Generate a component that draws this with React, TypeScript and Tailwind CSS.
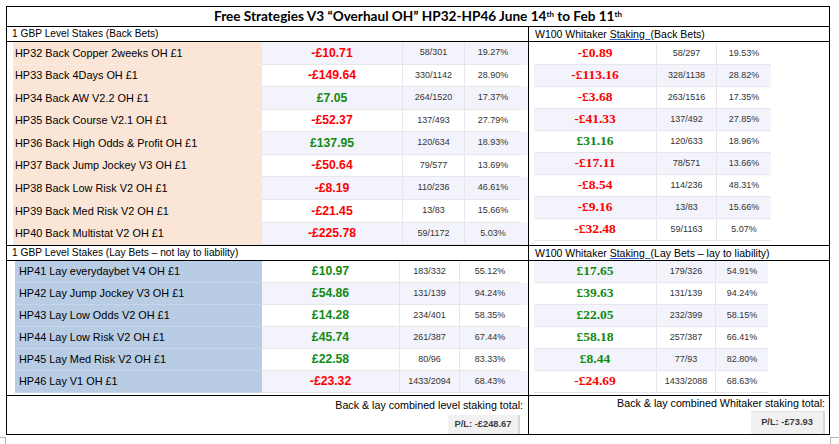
const backRows = [
  ["HP32 Back Copper 2weeks OH £1", "-£10.71", "58/301", "19.27%"],
  ["HP33 Back 4Days OH £1", "-£149.64", "330/1142", "28.90%"],
  ["HP34 Back AW V2.2 OH £1", "£7.05", "264/1520", "17.37%"],
  ["HP35 Back Course V2.1 OH £1", "-£52.37", "137/493", "27.79%"],
  ["HP36 Back High Odds & Profit OH £1", "£137.95", "120/634", "18.93%"],
  ["HP37 Back Jump Jockey V3 OH £1", "-£50.64", "79/577", "13.69%"],
  ["HP38 Back Low Risk V2 OH £1", "-£8.19", "110/236", "46.61%"],
  ["HP39 Back Med Risk V2 OH £1", "-£21.45", "13/83", "15.66%"],
  ["HP40 Back Multistat V2 OH £1", "-£225.78", "59/1172", "5.03%"],
];

const backWhitaker = [
  ["-£0.89", "58/297", "19.53%"],
  ["-£113.16", "328/1138", "28.82%"],
  ["-£3.68", "263/1516", "17.35%"],
  ["-£41.33", "137/492", "27.85%"],
  ["£31.16", "120/633", "18.96%"],
  ["-£17.11", "78/571", "13.66%"],
  ["-£8.54", "114/236", "48.31%"],
  ["-£9.16", "13/83", "15.66%"],
  ["-£32.48", "59/1163", "5.07%"],
];

const layRows = [
  ["HP41 Lay everydaybet V4 OH £1", "£10.97", "183/332", "55.12%"],
  ["HP42 Lay Jump Jockey V3 OH £1", "£54.86", "131/139", "94.24%"],
  ["HP43 Lay Low Odds V2 OH £1", "£14.28", "234/401", "58.35%"],
  ["HP44 Lay Low Risk V2 OH £1", "£45.74", "261/387", "67.44%"],
  ["HP45 Lay Med Risk V2 OH £1", "£22.58", "80/96", "83.33%"],
  ["HP46 Lay V1 OH £1", "-£23.32", "1433/2094", "68.43%"],
];

const layWhitaker = [
  ["£17.65", "179/326", "54.91%"],
  ["£39.63", "131/139", "94.24%"],
  ["£22.05", "232/399", "58.15%"],
  ["£58.18", "257/387", "66.41%"],
  ["£8.44", "77/93", "82.80%"],
  ["-£24.69", "1433/2088", "68.63%"],
];

const money = (v: string) => (v.startsWith("-") ? "text-[#ff0000]" : "text-[#118a11]");

function Staking({ label }: { label: string }) {
  return (
    <div className="h-[15px] pl-[6px] text-[10.5px] leading-[14px] text-black">
      W100 Whitaker{" "}
      <span className="underline decoration-[#2f5cc8] underline-offset-[1px]">Staking&nbsp;&nbsp;</span>
      {label}
    </div>
  );
}

export default function App() {
  return (
    <div className="h-[444px] w-[839px] bg-white pt-[6px] pl-[6px] font-['Liberation_Sans',Arial,sans-serif] text-black">
      <div className="w-[824px] border border-black">
        {/* title */}
        <div className="flex h-[20px] items-center justify-center border-b border-black font-['Lato',sans-serif] text-[13.6px] font-bold">
          <span>
            Free Strategies V3 “Overhaul OH” HP32-HP46 June 14<sup className="text-[8px]">th</sup> to Feb 11
            <sup className="text-[8px]">th</sup>
          </span>
        </div>

        {/* back bets header */}
        <div className="flex h-[15px] border-b border-black">
          <div className="w-[522px] border-r border-black pl-[5px] text-[10.2px] leading-[14px]">1 GBP Level Stakes (Back Bets)</div>
          <div className="w-[300px]">
            <Staking label="(Back Bets)" />
          </div>
        </div>

        {/* back bets body */}
        <div className="flex h-[204px] border-b border-black">
          <div className="flex w-[522px] flex-col border-r border-black pl-[6px]">
            {backRows.map((r, i) => (
              <div key={r[0]} className={`flex flex-1 items-center ${i % 2 === 0 ? "bg-[#f3f3fb]" : "bg-white"}`}>
                <div className="flex h-full w-[249px] items-center border-b border-[#f6ece4] bg-[#fbe5d6] pl-[2px] text-[10.9px]">{r[0]}</div>
                <div className={`flex h-full w-[141px] items-center justify-center border-b border-r border-[#e6e6ec] text-[12.2px] font-bold ${money(r[1])}`}>{r[1]}</div>
                <div className="flex h-full w-[62px] items-center justify-center border-b border-r border-[#e6e6ec] text-[9px] text-[#333]">{r[2]}</div>
                <div className="flex h-full w-[56px] items-center justify-center border-b border-[#e6e6ec] text-[9px] text-[#333]">{r[3]}</div>
              </div>
            ))}
          </div>
          <div className="flex w-[300px] flex-col pt-[1px] pl-[5px]">
            {backWhitaker.map((r, i) => (
              <div key={i} className={`flex h-[22px] w-[237px] ${i % 2 === 1 ? "bg-[#f3f3fb]" : "bg-white"}`}>
                <div className={`flex w-[123px] items-center justify-center border-b border-r border-[#e6e6ec] font-['Liberation_Serif',serif] text-[13.5px] font-bold ${money(r[0])}`}>{r[0]}</div>
                <div className="flex w-[60px] items-center justify-center border-b border-r border-[#e6e6ec] text-[9px] text-[#333]">{r[1]}</div>
                <div className="flex w-[54px] items-center justify-center border-b border-[#e6e6ec] text-[9px] text-[#333]">{r[2]}</div>
              </div>
            ))}
          </div>
        </div>

        {/* lay bets header */}
        <div className="flex h-[15px] border-b border-black">
          <div className="w-[522px] border-r border-black pl-[5px] text-[10.2px] leading-[14px]">1 GBP Level Stakes (Lay Bets – not lay to liability)</div>
          <div className="w-[300px]">
            <Staking label="(Lay Bets – lay to liability)" />
          </div>
        </div>

        {/* lay bets body */}
        <div className="flex h-[135px] border-b border-black">
          <div className="flex w-[522px] flex-col border-r border-black pl-[8px]">
            {layRows.map((r, i) => (
              <div key={r[0]} className={`flex h-[22px] items-center ${i % 2 === 1 ? "bg-[#f3f3fb]" : "bg-white"}`}>
                <div className="flex h-full w-[247px] items-center border-b border-[#c6d5e9] bg-[#b8cce4] pl-[4px] text-[10.9px]">{r[0]}</div>
                <div className={`flex h-full w-[138px] items-center justify-center border-b border-r border-[#e6e6ec] text-[12.2px] font-bold ${money(r[1])}`}>{r[1]}</div>
                <div className="flex h-full w-[60px] items-center justify-center border-b border-r border-[#e6e6ec] text-[9px] text-[#333]">{r[2]}</div>
                <div className="flex h-full w-[60px] items-center justify-center border-b border-[#e6e6ec] text-[9px] text-[#333]">{r[3]}</div>
              </div>
            ))}
          </div>
          <div className="flex w-[300px] flex-col pl-[5px]">
            {layWhitaker.map((r, i) => (
              <div key={i} className={`flex h-[22px] w-[234px] ${i % 2 === 0 ? "bg-[#f3f3fb]" : "bg-white"}`}>
                <div className={`flex w-[123px] items-center justify-center border-b border-r border-[#e6e6ec] font-['Liberation_Serif',serif] text-[13.5px] font-bold ${money(r[0])}`}>{r[0]}</div>
                <div className="flex w-[59px] items-center justify-center border-b border-r border-[#e6e6ec] text-[9px] text-[#333]">{r[1]}</div>
                <div className="flex w-[52px] items-center justify-center border-b border-[#e6e6ec] text-[9px] text-[#333]">{r[2]}</div>
              </div>
            ))}
          </div>
        </div>

        {/* totals */}
        <div className="flex h-[38px]">
          <div className="flex w-[522px] flex-col items-end border-r border-black pt-[2px] pr-[5px]">
            <div className="text-[10.7px] leading-[14px]">Back &amp; lay combined level staking total:</div>
            <div className="mt-[3px] mr-[3px] flex h-[19px] w-[72px] items-center justify-center border-r-2 border-[#d8d8d8] bg-[#f1f1f1] text-[9.3px] font-bold text-[#3c3c3c]">
              P/L: -£248.67
            </div>
          </div>
          <div className="flex w-[300px] flex-col items-end pr-[4px]">
            <div className="text-[10.7px] leading-[14px]">Back &amp; lay combined Whitaker staking total:</div>
            <div className="mt-[1px] flex h-[23px] w-[74px] items-center justify-center border-t border-r-2 border-[#e0e0e0] border-r-[#d8d8d8] bg-[#f1f1f1] text-[9.3px] font-bold text-[#3c3c3c]">
              P/L: -£73.93
            </div>
          </div>
        </div>
      </div>

      {/* page corner marks */}
      <div className="-ml-[6px] flex w-[839px] justify-between pt-[2px]">
        <div className="h-[7px] w-[6px] border-t border-r border-[#b5b5b5]" />
        <div className="h-[7px] w-[9px] border-t border-l border-[#b5b5b5]" />
      </div>
    </div>
  );
}
